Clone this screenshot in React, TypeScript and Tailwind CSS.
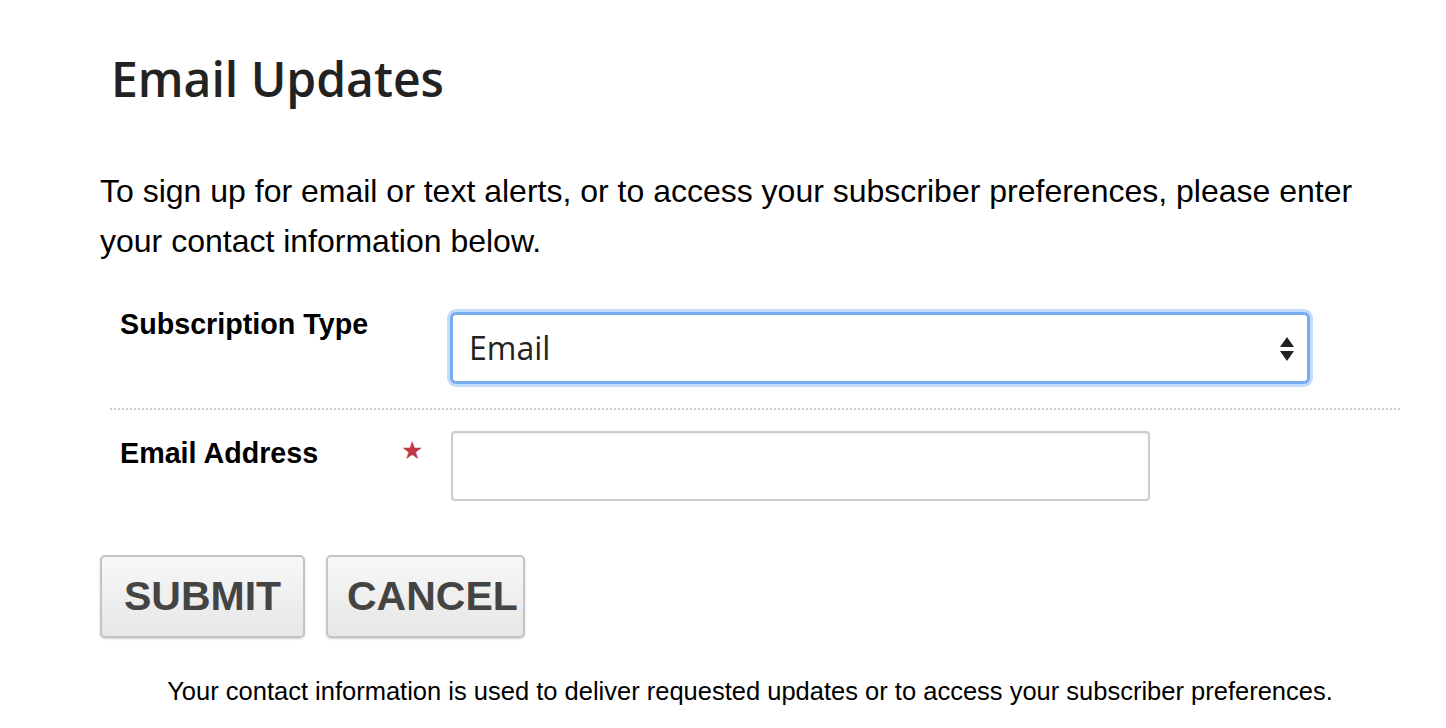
import React from 'react';

export default function App() {
  return (
    <div className="w-[1446px] h-[728px] bg-white overflow-hidden" style={{ fontFamily: '"Liberation Sans", Arial, sans-serif' }}>
      <div className="pl-[100px] pr-[46px]">
        <h1 className="pl-[11px] pt-[49px] text-[48px] leading-[60px] font-semibold text-[#222]" style={{ fontFamily: '"Open Sans", sans-serif' }}>
          Email Updates
        </h1>

        <p className="mt-[57px] text-[32px] leading-[50px] text-black">
          To sign up for email or text alerts, or to access your subscriber preferences, please enter your contact information below.
        </p>

        {/* Subscription type */}
        <div className="mt-[46px] ml-[10px] flex items-start pb-[24px] border-b-2 border-dotted border-[#ccc]">
          <label className="w-[340px] pl-[10px] text-[28.7px] leading-[24px] font-bold text-black">Subscription Type</label>
          <div className="relative w-[860px] h-[72px] rounded-[6px] border-[3px] border-[#78acf0] ring-[3px] ring-[#c4dcfb] bg-white flex items-center">
            <span className="pl-[16px] text-[32px] text-[#222]" style={{ fontFamily: '"Open Sans", sans-serif' }}>Email</span>
            <svg className="absolute right-[12px] top-[20px]" width="16" height="28" viewBox="0 0 16 28">
              <path d="M8 2 L15 12 L1 12 Z" fill="#222" />
              <path d="M1 16 L15 16 L8 26 Z" fill="#222" />
            </svg>
          </div>
        </div>

        {/* Email address */}
        <div className="mt-[21px] ml-[10px] flex items-start">
          <label className="w-[291px] pl-[10px] pt-[10px] text-[28.7px] leading-[24px] font-bold text-black">Email Address</label>
          <span className="w-[50px] pt-[8px] text-[25px] leading-[24px] text-[#c0394b]" style={{ fontFamily: '"DejaVu Sans", sans-serif' }}>★</span>
          <input className="w-[699px] h-[70px] rounded-[4px] border-2 border-[#ccc] bg-white shadow-[inset_0_1px_2px_rgba(0,0,0,0.08)]" />
        </div>

        {/* Buttons */}
        <div className="mt-[54px] flex gap-[21px]">
          <button className="w-[205px] h-[83px] rounded-[5px] border-2 border-[#c4c4c4] bg-gradient-to-b from-[#f8f8f8] to-[#e6e6e6] shadow-[0_1px_2px_rgba(0,0,0,0.2)] text-[41px] font-bold text-[#444]">
            SUBMIT
          </button>
          <button className="w-[199px] h-[83px] rounded-[5px] border-2 border-[#c4c4c4] bg-gradient-to-b from-[#f8f8f8] to-[#e6e6e6] shadow-[0_1px_2px_rgba(0,0,0,0.2)] text-[41px] font-bold text-[#444] pl-[19px] text-left whitespace-nowrap">
            CANCEL
          </button>
        </div>

        <p className="mt-[34px] text-center text-[25.5px] text-black">
          Your contact information is used to deliver requested updates or to access your subscriber preferences.
        </p>
      </div>
    </div>
  );
}
